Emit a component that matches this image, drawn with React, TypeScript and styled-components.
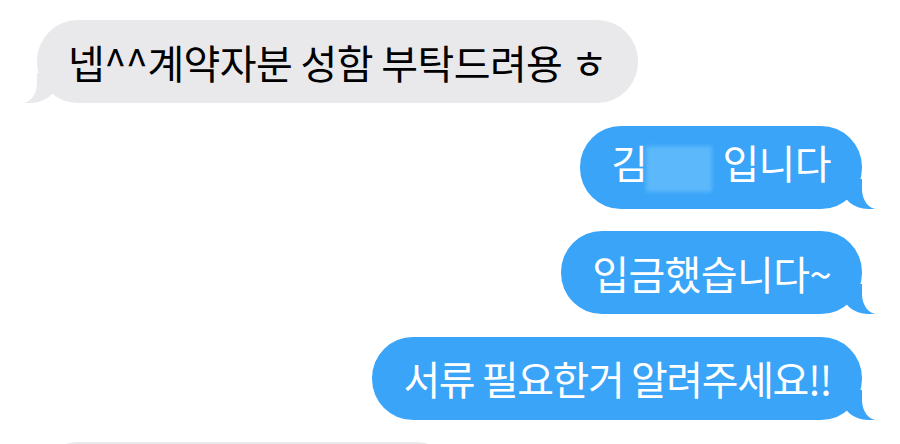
import React from 'react'
import styled, { createGlobalStyle, css } from 'styled-components'

const GlobalStyle = createGlobalStyle`
  html, body {
    margin: 0;
    padding: 0;
    background: #ffffff;
    overflow: hidden;
  }
  body {
    font-family: "Noto Sans CJK KR", "Noto Sans", sans-serif;
  }
`

const BLUE = '#39a4f8'
const GRAY = '#e9e9eb'

const Thread = styled.div`
  width: 900px;
  height: 444px;
  box-sizing: border-box;
  padding: 20px 38px 0 37px;
  display: flex;
  flex-direction: column;
  gap: 22.5px;
  overflow: hidden;
`

const Row = styled.div<{ sent?: boolean }>`
  display: flex;
  justify-content: ${p => (p.sent ? 'flex-end' : 'flex-start')};
`

const Bubble = styled.div<{ sent?: boolean; width?: number; tracking?: number }>`
  position: relative;
  box-sizing: border-box;
  height: 83px;
  padding: 0 31px;
  border-radius: 41px;
  display: flex;
  align-items: center;
  font-size: 40px;
  line-height: 1;
  letter-spacing: ${p => p.tracking ?? -0.6}px;
  white-space: nowrap;
  ${p => p.width && `width: ${p.width}px;`}

  &::before,
  &::after {
    content: '';
    position: absolute;
    bottom: 0;
    height: 30px;
  }

  ${p => p.sent ? css`
    background: ${BLUE};
    color: #ffffff;

    &::before {
      right: -14px;
      width: 34px;
      background: ${BLUE};
      border-bottom-left-radius: 26px 22px;
    }
    &::after {
      right: -34px;
      width: 34px;
      background: #ffffff;
      border-bottom-left-radius: 15px 20px;
    }
  ` : css`
    background: ${GRAY};
    color: #000000;

    &::before {
      left: -14px;
      width: 34px;
      background: ${GRAY};
      border-bottom-right-radius: 26px 22px;
    }
    &::after {
      left: -34px;
      width: 34px;
      background: #ffffff;
      border-bottom-right-radius: 15px 20px;
    }
  `}
`

const Text = styled.span`
  position: relative;
  z-index: 1;
`

const Blurred = styled.span`
  display: inline-block;
  width: 66px;
  height: 46px;
  margin: 0 10px 0 -1px;
  vertical-align: middle;
  background: #5cb8fb;
  filter: blur(2px);
`

const messages = [
  { sent: false, text: '넵^^계약자분 성함 부탁드려용 ㅎ' },
  { sent: true, text: '김', hidden: true, rest: '입니다' },
  { sent: true, text: '입금했습니다~' },
  { sent: true, text: '서류 필요한거 알려주세요!!', tracking: -1.4 },
]

const App: React.FC = () => {
  return (
    <>
      <GlobalStyle />
      <Thread>
        {messages.map((m, i) => (
          <Row key={i} sent={m.sent}>
            <Bubble sent={m.sent} tracking={m.tracking}>
              <Text>
                {m.text}
                {m.hidden && <Blurred />}
                {m.rest}
              </Text>
            </Bubble>
          </Row>
        ))}
        <Row>
          <Bubble width={420}>
            <Text>&nbsp;</Text>
          </Bubble>
        </Row>
      </Thread>
    </>
  )
}

export default App
